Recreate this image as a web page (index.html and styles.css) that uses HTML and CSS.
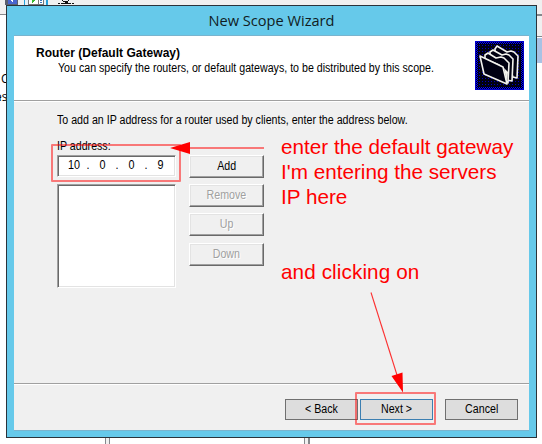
FILE: index.html
```html
<!DOCTYPE html>
<html lang="en">
<head>
<meta charset="utf-8">
<title>New Scope Wizard</title>
<link rel="stylesheet" href="styles.css">
</head>
<body>
<div class="desktop">
  <svg class="backdrop" width="542" height="444" shape-rendering="crispEdges" aria-hidden="true">
    <path fill="#f0f0f0" d="M0 0H542V14H0z M537 14h5v22h-5z"/>
    <path fill="#85888c" d="M0 14h6v1H0z M537 14h5v2h-5z M537 36h5v1h-5z M105 438h1v6h-1z M109 438h1v6h-1z M304 438h1v6h-1z M308 438h2v6h-2z"/>
    <path fill="#f0f0f0" d="M106 438h3v6h-3z M305 438h3v6h-3z"/>
    <path fill="#a9c2e4" d="M537 38h5v25h-5z"/>
    <path fill="#5a6070" d="M5 0h13v5H5z"/><path fill="#4965cf" d="M8 0h9v4H8z"/><path fill="#fff" d="M11 0h2v1h-2z M12 1h1v1h-1z"/>
    <path fill="#26a0da" d="M24 0h24v5H24z"/><path fill="#e5f1f8" d="M25 0h21v5H25z"/>
    <path fill="#777" d="M28 0h16v5H28z"/><path fill="#fff" d="M29 0h9v4h-9z M39 0h4v4h-4z"/><path fill="#39b92f" d="M32 0h3v1h-1v1h-1v1h-1z"/><path fill="#3979bd" d="M40 0h2v1h-2z M40 2h2v1h-2z"/>
    <path fill="#111" d="M58 3h2v1h-2z M61 3h10v1H61z M72 3h2v1h-2z M62 0h1v1h-1z M63 1h5v1h-5z M68 0h1v1h-1z M65 2h3v1h-3z"/>
    <path fill="#26a0da" d="M0 98h1v2H0z"/>
  </svg>
  <div class="peek peek-c">C</div>
  <div class="peek peek-es">es</div>

  <main class="window">
    <h1 class="titlebar"><span>New Scope Wizard</span></h1>
    <div class="client">
      <header class="banner">
        <div class="heading">
          <h2>Router (Default Gateway)</h2>
          <p><span class="ui">You can specify the routers, or default gateways, to be distributed by this scope.</span></p>
        </div>
        <svg class="folders" width="49" height="49" viewBox="0 0 49 49" aria-hidden="true">
          <defs>
            <pattern id="checker" width="2" height="2" patternUnits="userSpaceOnUse"><path fill="#00000c" d="M0 0h2v2H0z"/><path fill="#0000ff" d="M0 0h1v1H0z M1 1h1v1H1z"/></pattern>
            <pattern id="sparse" width="3" height="3" patternUnits="userSpaceOnUse"><path fill="#000010" d="M0 0h3v3H0z"/><path fill="#0000c0" d="M1 1h1v1H1z"/></pattern>
          </defs>
          <path fill="url(#checker)" d="M0 0h49v49H0z"/><path fill="url(#sparse)" d="M3 3h43v43H3z"/>
          <path fill="none" stroke="#0000c8" d="M.5.5h48v48H.5z"/>
          <g fill="#000012" stroke="#f2f2ee" stroke-width="1.6" stroke-linejoin="round">
            <path d="M38 36L32 20L20 11L20 8L22 5L32 11L36 10L39 11L43 15L42 37z"/>
            <path d="M32 39L28 22L15 15L15 11L18 9L27 14L31 13L34 14L38 18L37 40z"/>
            <path d="M28 36L24 24L10 18L10 14L13 12L21 17L26 16L29 17L34 22L33 42z"/>
            <path d="M5 15L28 26L32 43L9 33L5 15z"/>
          </g>
          <path fill="#f2f2ee" d="M29 27l4 4l-1 11z"/>
        </svg>
      </header>

      <section class="page">
        <p><span class="ui">To add an IP address for a router used by clients, enter the address below.</span></p>
        <p class="label"><span class="ui">IP address:</span></p>
        <div class="form">
          <div class="fields">
            <div class="ip"><span>10</span><span>.</span><span>0</span><span>.</span><span>0</span><span>.</span><span>9</span></div>
            <div class="list"></div>
          </div>
          <div class="actions">
            <button class="classic"><span class="ui mid">Add</span></button>
            <button class="classic" disabled><span class="ui mid">Remove</span></button>
            <button class="classic" disabled><span class="ui mid">Up</span></button>
            <button class="classic low" disabled><span class="ui mid">Down</span></button>
          </div>
        </div>
      </section>

      <footer class="footer">
        <button class="flat"><span class="ui mid">&lt; Back</span></button>
        <button class="flat default"><span class="ui mid">Next &gt;</span></button>
        <button class="flat cancel"><span class="ui mid">Cancel</span></button>
      </footer>
    </div>
  </main>

  <svg class="markup" width="542" height="444" aria-hidden="true">
    <g fill="none" stroke="#ff0000" stroke-opacity=".5" stroke-width="2" stroke-linejoin="round">
      <path d="M52 145H180V181H52z"/><path d="M356 393H435V424H356z"/><path d="M188 148H264"/>
    </g>
    <path stroke="#ff0000" stroke-opacity=".8" stroke-width="1.1" d="M371 292.500L397 375"/>
    <path fill="#ff0000" d="M170 148L190 142V154z M403 392.500L391.500 376L402.500 372.500z"/>
  </svg>
  <div class="note note-gateway">enter the default gateway<br>I'm entering the servers<br>IP here</div>
  <div class="note note-click">and clicking on</div>
</div>
</body>
</html>
```

FILE: styles.css
```css
* { box-sizing: border-box; }
body { margin: 0; font: 12px/13px "Liberation Sans", Arial, sans-serif; color: #000; }
h1, h2, p { margin: 0; }
.desktop { position: relative; width: 542px; height: 444px; padding: 5px 0 0 6px; background: #fff; overflow: hidden; white-space: nowrap; }
.backdrop, .markup { position: absolute; left: 0; top: 0; }
.peek { position: absolute; font: 12px/14px "Open Sans", sans-serif; }
.peek-c { left: 1px; top: 72px; }
.peek-es { left: -5px; top: 90px; }
.ui { display: inline-block; transform: scaleX(.887); transform-origin: 0 50%; }
.mid { transform-origin: 50% 50%; }
.window { position: relative; width: 531px; height: 433px; padding: 0 7px 7px; border: 1px solid #2b333a; background: #66c9ea; }
.titlebar { height: 29px; text-align: center; font: 400 14.6px/29px "Open Sans", "Noto Sans", sans-serif; color: #111c22; }
.client { height: 396px; border-top: 1px solid #79b4ce; border-bottom: 1px solid #79b4ce; background: #f0f0f0; }
.banner { display: flex; justify-content: space-between; height: 66px; padding: 5px 5px 0 22px; background: #fff; border-bottom: 1px solid #fff; box-shadow: inset 0 -1px #a0a0a0; }
.heading { width: 400px; padding-top: 5px; }
.heading h2 { font-size: 12px; line-height: 14px; letter-spacing: .03px; }
.heading p { margin-top: 2px; padding-left: 22px; }
.folders { display: block; flex: none; }
.page { height: 282px; padding: 12px 43px 0; border-bottom: 1px solid #a0a0a0; }
.label { margin-top: 13px; }
.form { display: flex; gap: 13px; margin-top: 2px; }
.fields { display: grid; gap: 7px; align-content: start; }
.ip, .list { width: 119px; border: 1px solid; border-color: #a0a0a0 #fff #fff #a0a0a0; background: #fff; box-shadow: inset 1px 1px #696969, inset -1px -1px #e3e3e3; }
.ip { display: grid; grid-template-columns: 16px 12px 17px 12px 17px 12px 17px; align-items: center; text-align: center; height: 22px; padding: 0 0 2px 8px; }
.ip span { transform: scaleX(.9); }
.list { height: 104px; }
.actions { display: flex; flex-direction: column; gap: 6px; }
button { font: inherit; padding: 0; color: #000; }
.classic { width: 75px; height: 23px; border: 1px solid; border-color: #fff #696969 #696969 #fff; background: #f0f0f0; box-shadow: inset -1px -1px #a0a0a0, inset 1px 1px #e3e3e3; }
.classic:disabled { color: #a0a0a0; text-shadow: 1px 1px #fff; }
.low { margin-top: 1px; }
.footer { display: flex; justify-content: flex-end; height: 46px; padding: 14px 11px 0 0; border-top: 1px solid #fff; }
.flat { width: 73px; height: 21px; margin-left: 2px; border: 1px solid #707070; background: #dddddd; }
.default { border-color: #3c7fb1; }
.cancel { margin-left: 12px; }
.note { position: absolute; left: 281px; color: #ff0000; font-size: 20.7px; line-height: 25px; }
.note-gateway { top: 134px; }
.note-click { top: 259px; }
.note-click { letter-spacing: .1px; }
```
